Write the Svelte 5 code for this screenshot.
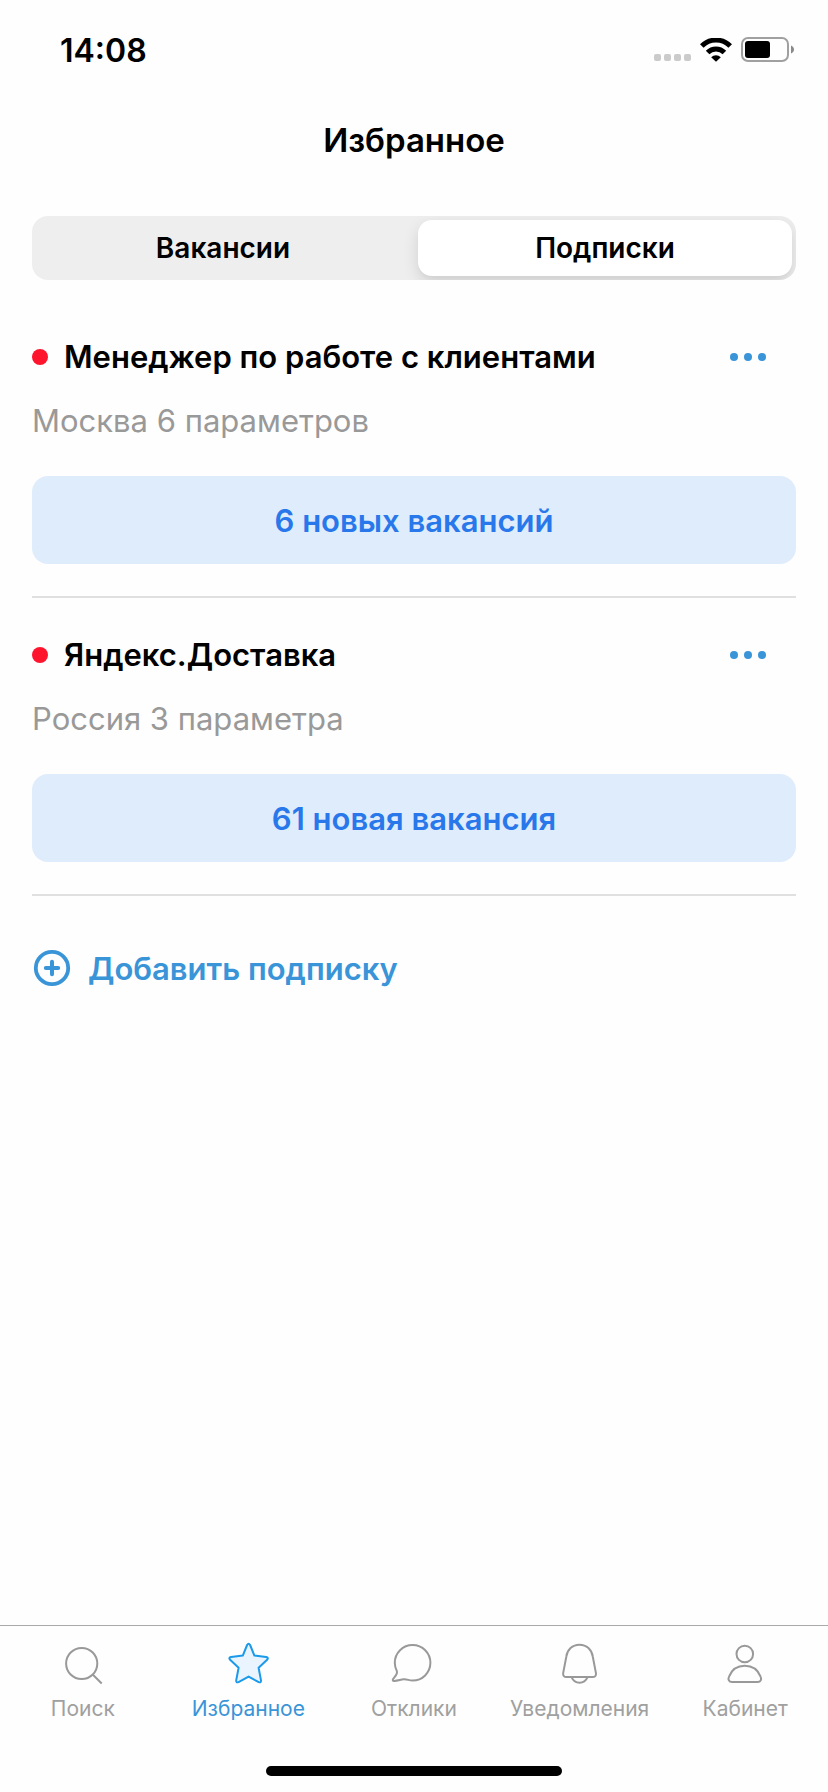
<script lang="ts">
  interface Subscription {
    id: number;
    title: string;
    details: string;
    action: string;
  }

  const segments = ['Вакансии', 'Подписки'];
  const tabs = [
    { id: 'search', label: 'Поиск' },
    { id: 'favorites', label: 'Избранное' },
    { id: 'responses', label: 'Отклики' },
    { id: 'notifications', label: 'Уведомления' },
    { id: 'profile', label: 'Кабинет' },
  ];
  const subscriptions: Subscription[] = [
    { id: 1, title: 'Менеджер по работе с клиентами', details: 'Москва 6 параметров', action: '6 новых вакансий' },
    { id: 2, title: 'Яндекс.Доставка', details: 'Россия 3 параметра', action: '61 новая вакансия' },
  ];

  let activeSegment = $state('Подписки');
  let activeTab = $state('favorites');
</script>

<div class="screen">
  <div class="status-bar">
    <span class="time">14:08</span>
    <div class="status-icons">
      <svg class="signal" viewBox="0 0 37 24" width="37" height="24" fill="#cbcbcb">
        <rect x="0" y="16" width="7" height="7" rx="2" />
        <rect x="10" y="16" width="7" height="7" rx="2" />
        <rect x="20" y="16" width="7" height="7" rx="2" />
        <rect x="30" y="16" width="7" height="7" rx="2" />
      </svg>
      <svg viewBox="0 0 32 24" width="32" height="24">
        <path d="M1.8 8A20 20 0 0 1 30.2 8" fill="none" stroke="#000" stroke-width="5" />
        <path d="M7.6 14.4A11.8 11.8 0 0 1 24.4 14.4" fill="none" stroke="#000" stroke-width="5" />
        <path d="M11.2 19.2A6.8 6.8 0 0 1 20.8 19.2L16 23.8Z" fill="#000" />
      </svg>
      <svg viewBox="0 0 53 26" width="53" height="26">
        <rect x="1" y="1" width="46" height="23" rx="6" fill="none" stroke="#a0a0a0" stroke-width="2" />
        <rect x="4" y="4" width="25" height="17" rx="3" fill="#000" />
        <path d="M50 8.5C52 9.3 53 10.8 53 12.5S52 15.7 50 16.5Z" fill="#8a8a8a" />
      </svg>
    </div>
  </div>

  <header class="header">
    <h1>Избранное</h1>
  </header>

  <main class="content">
    <div class="segmented">
      {#each segments as segment}
        <button
          class="segment"
          class:active={activeSegment === segment}
          aria-pressed={activeSegment === segment}
          onclick={() => (activeSegment = segment)}
        >{segment}</button>
      {/each}
    </div>

    <div class="list">
      {#each subscriptions as item (item.id)}
        <article class="item">
          <div class="item-head">
            <span class="dot"></span>
            <h2>{item.title}</h2>
            <button class="more" aria-label="Ещё">
              <svg viewBox="0 0 36 8" width="36" height="8" fill="#3a94d8">
                <circle cx="4" cy="4" r="4" />
                <circle cx="18" cy="4" r="4" />
                <circle cx="32" cy="4" r="4" />
              </svg>
            </button>
          </div>
          <p class="details">{item.details}</p>
          <button class="action">{item.action}</button>
        </article>
      {/each}
    </div>

    <button class="add">
      <svg viewBox="0 0 40 40" width="40" height="40" fill="none" stroke="#3a94d8">
        <circle cx="20" cy="20" r="16.2" stroke-width="3.8" />
        <path d="M20 13.8V26.2M13.8 20H26.2" stroke-width="4" stroke-linecap="round" />
      </svg>
      Добавить подписку
    </button>
  </main>

  <footer class="footer">
    <nav class="tab-bar">
      {#each tabs as tab (tab.id)}
        <button class="tab" class:active={activeTab === tab.id} onclick={() => (activeTab = tab.id)}>
          <svg viewBox="0 0 48 48" width="48" height="48">
            {#if tab.id === 'search'}
              <circle cx="22.7" cy="23.5" r="15.6" />
              <path d="M33.7 34.5L42.7 43.5" />
            {:else if tab.id === 'favorites'}
              <path
                class="star"
                d="M23.1 5Q24.6 2.6 26.1 5L30.4 15.6L42.1 17Q45 17.6 43.1 19.8L34.6 27.8L37 40.4Q37.1 43.1 34.7 42.1L24.6 36.6L14.5 42.1Q12.1 43.1 12.2 40.4L14.6 27.8L6.1 19.8Q4.2 17.6 7.1 17L18.8 15.6Z"
              />
            {:else if tab.id === 'responses'}
              <path d="M6.9 31.2C5.5 28.6 4.8 25.8 4.8 22.8A17.8 17.8 0 1 1 22.5 40.6C19 40.6 17 39 13.6 39.3C10.6 39.6 8 40.7 4.2 40.9C2.8 41 2.4 40.2 3.1 39C4.6 36.8 7.8 34.2 6.9 31.2Z" />
            {:else if tab.id === 'notifications'}
              <path d="M10.3 16.7C11.2 9.6 16.4 4.8 23.5 4.8S35.8 9.6 36.8 16.7L40 33.4C40.2 35.8 38.9 37.1 36.7 37.1H10.4C8.2 37.1 7 35.8 7.1 33.4Z" />
              <path d="M15.6 37.4C17.2 40.8 20 42.7 23.5 42.7S29.9 40.8 31.5 37.4" />
            {:else}
              <circle cx="23.8" cy="14" r="8.3" />
              <path d="M11 42H36.6C39.8 42 40.8 39.4 39.6 36.6C36.8 29.6 31 25.8 23.8 25.8S10.8 29.6 8 36.6C6.8 39.4 7.8 42 11 42Z" />
            {/if}
          </svg>
          <span>{tab.label}</span>
        </button>
      {/each}
    </nav>
    <div class="home-indicator"></div>
  </footer>
</div>

<style>
  :global(body) {
    margin: 0;
    background: #fefefe;
  }

  .screen {
    min-height: 100vh;
    display: flex;
    flex-direction: column;
    background: #fefefe;
    color: #000;
    font-family: Inter, "Liberation Sans", sans-serif;
  }

  button {
    padding: 0;
    border: none;
    background: none;
    color: inherit;
    font-family: inherit;
    cursor: pointer;
  }

  svg {
    display: block;
  }

  .status-bar {
    display: flex;
    align-items: center;
    justify-content: space-between;
    height: 88px;
    padding: 12px 34px 0 60px;
    box-sizing: border-box;
  }

  .time {
    font-size: 32px;
    font-weight: 600;
  }

  .status-icons {
    display: flex;
    align-items: center;
    gap: 9px;
  }

  .header {
    display: flex;
    align-items: center;
    justify-content: center;
    height: 104px;
  }

  h1 {
    margin: 0;
    font-size: 33px;
    font-weight: 600;
    line-height: 40px;
  }

  .content {
    flex: 1;
    padding: 24px 32px;
  }

  .segmented {
    display: grid;
    grid-template-columns: 1fr 1fr;
    gap: 8px;
    height: 64px;
    padding: 4px;
    box-sizing: border-box;
    overflow: hidden;
    border-radius: 16px;
    background: #eee;
  }

  .segment {
    border-radius: 14px;
    font-size: 28px;
    font-weight: 600;
  }

  .segment.active {
    background: #fff;
    box-shadow: 0 6px 16px rgba(0, 0, 0, 0.12), 0 4px 2px rgba(0, 0, 0, 0.02);
  }

  .list {
    margin-top: 20px;
  }

  .item {
    padding: 36px 0 32px;
    border-bottom: 2px solid #e0e0e0;
  }

  .item-head {
    display: flex;
    align-items: center;
    gap: 16px;
  }

  .dot {
    width: 16px;
    height: 16px;
    border-radius: 50%;
    background: #ff142d;
  }

  h2 {
    flex: 1;
    margin: 0;
    font-size: 31px;
    font-weight: 600;
    line-height: 42px;
  }

  .more {
    display: flex;
    align-items: center;
    justify-content: center;
    width: 96px;
    height: 40px;
  }

  .details {
    margin: 23px 0 35px;
    color: #999;
    font-size: 31px;
    line-height: 40px;
  }

  .action {
    display: block;
    width: 100%;
    height: 88px;
    border-radius: 16px;
    background: #dfecfc;
    color: #2878eb;
    font-size: 31px;
    font-weight: 600;
  }

  .add {
    display: flex;
    align-items: center;
    gap: 16px;
    height: 40px;
    margin-top: 52px;
    color: #3a94d8;
    font-size: 31px;
    font-weight: 600;
  }

  .footer {
    border-top: 1px solid #aaa;
  }

  .tab-bar {
    display: grid;
    grid-template-columns: repeat(5, 1fr);
    padding-top: 14px;
  }

  .tab {
    display: flex;
    flex-direction: column;
    align-items: center;
    gap: 9px;
    color: #a0a0a0;
    font-size: 21px;
    line-height: 24px;
  }

  .tab svg {
    fill: none;
    stroke: #999;
    stroke-width: 2;
    stroke-linejoin: round;
  }

  .tab.active {
    color: #3a94d8;
  }

  .tab.active svg {
    stroke: #1b9aea;
  }

  .tab .star {
    fill: #e9f4fe;
  }

  .home-indicator {
    width: 296px;
    height: 10px;
    margin: 45px auto 16px;
    border-radius: 5px;
    background: #000;
  }
</style>
